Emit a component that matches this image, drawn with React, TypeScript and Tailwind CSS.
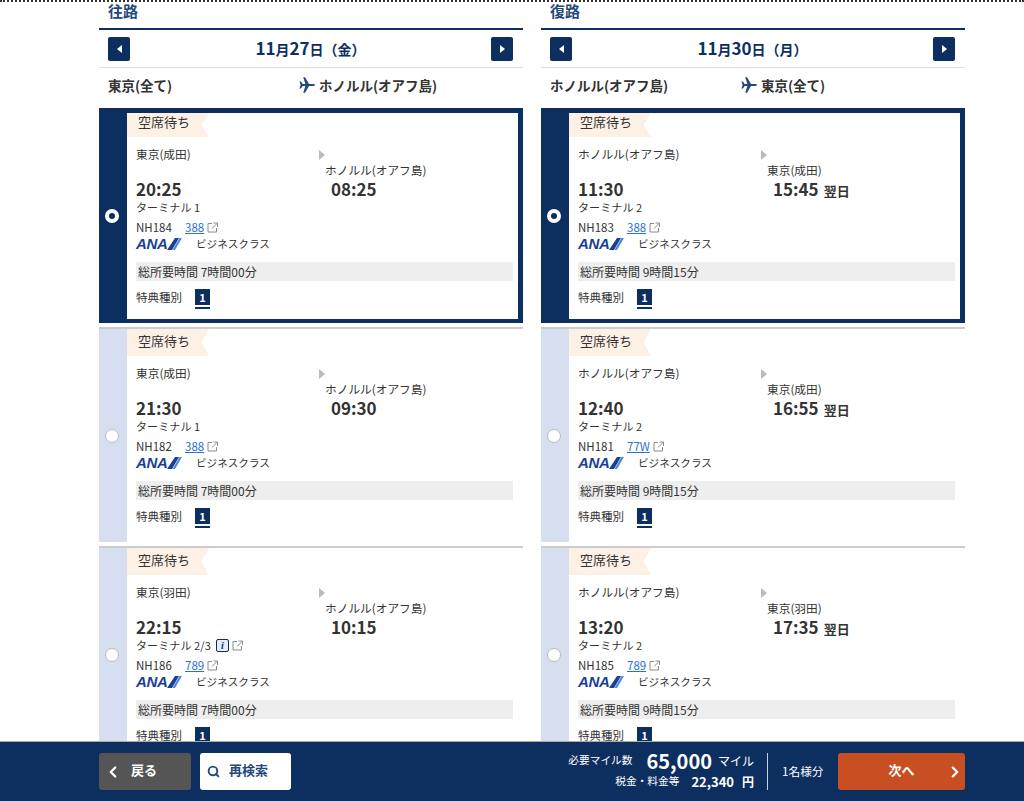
import { ChevronLeft, ChevronRight, Search } from 'lucide-react';

type Flight = {
  from: string;
  to: string;
  dep: string;
  arr: string;
  nextDay?: boolean;
  terminal: string;
  info?: boolean;
  no: string;
  plane: string;
  duration: string;
};

const outbound: Flight[] = [
  { from: '東京(成田)', to: 'ホノルル(オアフ島)', dep: '20:25', arr: '08:25', terminal: 'ターミナル 1', no: 'NH184', plane: '388', duration: '7時間00分' },
  { from: '東京(成田)', to: 'ホノルル(オアフ島)', dep: '21:30', arr: '09:30', terminal: 'ターミナル 1', no: 'NH182', plane: '388', duration: '7時間00分' },
  { from: '東京(羽田)', to: 'ホノルル(オアフ島)', dep: '22:15', arr: '10:15', terminal: 'ターミナル 2/3', info: true, no: 'NH186', plane: '789', duration: '7時間00分' },
];

const inbound: Flight[] = [
  { from: 'ホノルル(オアフ島)', to: '東京(成田)', dep: '11:30', arr: '15:45', nextDay: true, terminal: 'ターミナル 2', no: 'NH183', plane: '388', duration: '9時間15分' },
  { from: 'ホノルル(オアフ島)', to: '東京(成田)', dep: '12:40', arr: '16:55', nextDay: true, terminal: 'ターミナル 2', no: 'NH181', plane: '77W', duration: '9時間15分' },
  { from: 'ホノルル(オアフ島)', to: '東京(羽田)', dep: '13:20', arr: '17:35', nextDay: true, terminal: 'ターミナル 2', no: 'NH185', plane: '789', duration: '9時間15分' },
];

function ExtLink() {
  return (
    <svg width="11" height="11" viewBox="0 0 11 11" fill="none" stroke="#8a8a8a" strokeWidth="1" className="shrink-0">
      <path d="M5 1.5H1v8.5h8.5V6" />
      <path d="M5 6.5 10 1.5M6.5 1h4v4" />
    </svg>
  );
}

function PlaneIcon() {
  return (
    <svg width="16" height="16" viewBox="0 0 16 16" fill="#24487c" className="shrink-0 mr-[4px]">
      <path d="M0.5 4.5 H2 L3.6 7.1 H6.4 L4.2 0.2 H6 L10 7.1 H14 C15.2 7.1 16 7.5 16 8 C16 8.5 15.2 8.9 14 8.9 H10 L6 15.8 H4.2 L6.4 8.9 H3.6 L2 11.5 H0.5 L1.6 8 Z" />
    </svg>
  );
}

function AnaLogo() {
  return (
    <div className="flex items-center w-[46px] h-[14px]">
      <span className="font-['Liberation_Sans',sans-serif] font-bold italic text-[15px] leading-[14px] tracking-[-0.3px] text-[#1b3f94]">ANA</span>
      <svg width="15" height="12" viewBox="0 0 15 12" className="-ml-[1px] shrink-0">
        <polygon points="8,0 12,0 5,12 0,12" fill="#1b3f94" />
        <polygon points="12.5,0 15,0 8,12 5.5,12" fill="#4d8bd6" />
      </svg>
    </div>
  );
}

function Card({ f, selected }: { f: Flight; selected?: boolean }) {
  return (
    <div className={`flex h-[215px] ${selected ? 'bg-[#0d2f5f]' : 'bg-white border-t-2 border-[#ccc]'}`}>
      <div className={`w-[28px] shrink-0 flex items-center justify-center pr-[2px] ${selected ? '' : 'bg-[#d7deef]'}`}>
        {selected ? (
          <div className="w-[14px] h-[14px] rounded-full bg-white flex items-center justify-center">
            <div className="w-[6px] h-[6px] rounded-full bg-[#0d2f5f]" />
          </div>
        ) : (
          <div className="w-[14px] h-[14px] rounded-full bg-white border border-[#bbb]" />
        )}
      </div>
      <div className={`flex-1 min-w-0 bg-white ${selected ? 'mt-[5px] mr-[5px] mb-[4px]' : ''}`}>
        <div
          className={`w-[82px] bg-[#fdf1e6] pl-[11px] text-[13px] leading-[18px] text-[#333] [clip-path:polygon(0_0,100%_0,91%_50%,100%_100%,0_100%)] ${selected ? 'h-[24px]' : 'h-[27px] pt-[3px]'}`}
        >
          空席待ち
        </div>
        <div className="pl-[9px] text-[#333]">
          <div className="mt-[9px] flex">
            <div className="w-[183px] shrink-0">
              <div className="text-[11.7px] leading-[16px]">{f.from}</div>
            </div>
            <div>
              <div className="w-0 h-0 mt-[4px] border-y-[5px] border-y-transparent border-l-[6px] border-l-[#bbb]" />
              <div className="ml-[6px] mt-[2px] text-[11.7px] leading-[16px]">{f.to}</div>
            </div>
          </div>
          <div className="flex h-[20px] mt-[1px] font-bold text-[17px] leading-[20px]">
            <div className="w-[195px] shrink-0">{f.dep}</div>
            <div className="flex items-baseline">
              {f.arr}
              {f.nextDay && <span className="ml-[5px] text-[13px] leading-none">翌日</span>}
            </div>
          </div>
          <div className="flex items-center gap-[3px] h-[16px] text-[11px] leading-[16px]">
            <span className="tracking-[0.1px]">{f.terminal}</span>
            {f.info && (
              <span className="ml-[2px] w-[13px] h-[13px] border border-[#0d2f5f] rounded-[2px] bg-[#e6ecf7] text-[#0d2f5f] font-bold italic text-[10px] leading-[11px] text-center font-['Liberation_Serif',serif]">
                i
              </span>
            )}
            {f.info && <ExtLink />}
          </div>
          <div className="flex items-center mt-[4px] h-[16px] text-[11.5px] leading-[16px]">
            <span className="w-[49px]">{f.no}</span>
            <span className="text-[#2a6fd6] underline mr-[3px]">{f.plane}</span>
            <ExtLink />
          </div>
          <div className="flex items-center mt-[1px] h-[16px]">
            <AnaLogo />
            <span className="ml-[14px] text-[10.6px] leading-[16px]">ビジネスクラス</span>
          </div>
          <div className="mt-[10px] w-[377px] h-[19px] bg-[#eee] pl-[2px] text-[12px] leading-[19px]">総所要時間 {f.duration}</div>
          <div className="flex mt-[8px]">
            <span className="w-[59px] text-[11.5px] leading-[16px]">特典種別</span>
            <div className="w-[15px] h-[20px] border-b-2 border-[#0d2f5f]">
              <div className="h-[16px] bg-[#0d2f5f] text-white text-center text-[11px] font-bold leading-[16px]">1</div>
            </div>
          </div>
        </div>
      </div>
    </div>
  );
}

function Column({ title, date, week, from, to, flights }: { title: string; date: [string, string]; week: string; from: string; to: string; flights: Flight[] }) {
  return (
    <div className="w-[424px]">
      <h2 className="h-[28px] pl-[9px] text-[15px] leading-[18px] font-bold text-[#24487c] border-b-2 border-[#0d2f5f]">{title}</h2>
      <div className="h-[38px] pl-[9px] pr-[10px] flex items-center justify-between border-b border-[#ddd]">
        <button className="w-[22px] h-[24px] rounded-[2px] bg-[#0d2f5f] flex items-center justify-center">
          <span className="w-0 h-0 border-y-[4px] border-y-transparent border-r-[5px] border-r-white" />
        </button>
        <div className="text-[#0d2f5f] font-bold text-[17px] leading-[20px]">
          {date[0]}<span className="text-[14px]">月</span>{date[1]}<span className="text-[14px]">日（{week}）</span>
        </div>
        <button className="w-[22px] h-[24px] rounded-[2px] bg-[#0d2f5f] flex items-center justify-center">
          <span className="w-0 h-0 border-y-[4px] border-y-transparent border-l-[5px] border-l-white" />
        </button>
      </div>
      <div className="h-[40px] pl-[9px] pb-[6px] flex items-center text-[13.5px] font-bold text-[#333]">
        <span className="w-[191px]">{from}</span>
        <PlaneIcon />
        <span>{to}</span>
      </div>
      <div className="flex flex-col gap-[4px]">
        {flights.map((f, i) => (
          <Card key={f.no} f={f} selected={i === 0} />
        ))}
      </div>
    </div>
  );
}

export default function App() {
  return (
    <div className="relative h-[801px] overflow-hidden bg-white font-['Noto_Sans_CJK_JP',sans-serif]">
      <div className="h-[2px] border-t-2 border-dotted border-[#333]" />
      <div className="flex gap-[18px] pl-[99px]">
        <Column title="往路" date={['11', '27']} week="金" from="東京(全て)" to="ホノルル(オアフ島)" flights={outbound} />
        <Column title="復路" date={['11', '30']} week="月" from="ホノルル(オアフ島)" to="東京(全て)" flights={inbound} />
      </div>

      <div className="fixed left-0 right-0 bottom-0 h-[60px] bg-[#0d2f5f] border-t border-[#aaa] pl-[99px] pr-[59px] flex items-center justify-between">
        <div className="flex gap-[9px]">
          <button className="w-[92px] h-[37px] rounded-[3px] bg-[#555] text-white font-bold text-[13px] leading-[18px] pb-[3px] flex items-center pl-[5px]">
            <ChevronLeft size={18} strokeWidth={3} className="mt-[3px]" />
            <span className="ml-[9px]">戻る</span>
          </button>
          <button className="w-[91px] h-[37px] rounded-[3px] bg-white text-[#24487c] font-bold text-[13px] leading-[18px] pb-[3px] flex items-center pl-[7px]">
            <Search size={13} strokeWidth={3.5} className="mt-[3px]" />
            <span className="ml-[9px]">再検索</span>
          </button>
        </div>
        <div className="flex items-center">
          <div className="text-white flex flex-col items-end mb-[3px]">
            <div className="flex items-center h-[22px]">
              <span className="text-[10.7px]">必要マイル数</span>
              <span className="ml-[14px] font-bold text-[20px] leading-[22px]">65,000</span>
              <span className="ml-[6px] text-[12px]">マイル</span>
            </div>
            <div className="flex items-center h-[18px] mt-[1px]">
              <span className="text-[10.7px]">税金・料金等</span>
              <span className="ml-[12px] font-bold text-[13px]">22,340</span>
              <span className="ml-[8px] font-bold text-[12px]">円</span>
            </div>
          </div>
          <div className="w-px h-[37px] bg-[#c8d0de] ml-[13px]" />
          <span className="ml-[14px] w-[56px] text-white text-[11.7px] leading-[16px] pb-[2px]">1名様分</span>
          <button className="relative w-[127px] h-[37px] rounded-[3px] bg-[#c84f21] text-white font-bold text-[13px] leading-[18px] pb-[3px]">
            次へ
            <ChevronRight size={18} strokeWidth={3} className="absolute right-[1px] top-[10px]" />
          </button>
        </div>
      </div>
    </div>
  );
}
